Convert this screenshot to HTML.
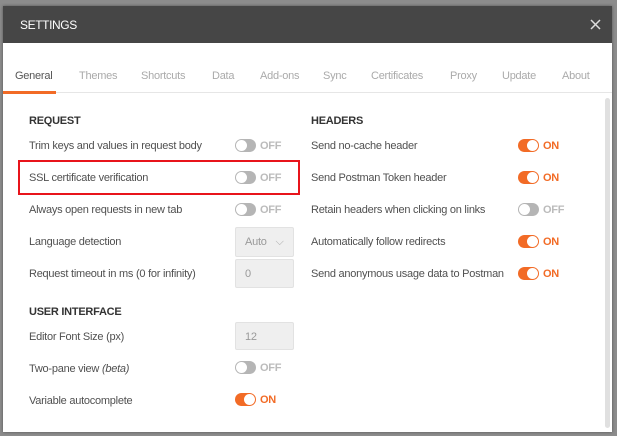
<!DOCTYPE html>
<html><head><style>
body{margin:0;width:617px;height:436px;background:#8c8c8c;position:relative;overflow:hidden;font-family:"Liberation Sans",sans-serif;font-size:11px;letter-spacing:-0.25px;color:#505050}
.d{position:absolute;left:3px;top:6px;width:609px;height:426px;background:#fff;box-shadow:0 0 3px rgba(0,0,0,.4)}
.h{position:absolute;left:0;top:0;width:609px;height:37px;background:#464646;color:#fff;font-size:12px}
.a{position:absolute;white-space:nowrap}
.tab{position:absolute;top:70px;color:#aaa;font-size:11px}
.tg{position:absolute;width:21px;height:13px;border-radius:7px;background:#b5b5b5}
.tg::after{content:"";position:absolute;top:1px;left:1px;width:11px;height:11px;border-radius:50%;background:#fff}
.tg.on{background:#f26b26}
.tg.on::after{left:9px}
.lb{position:absolute;font-weight:bold;font-size:11px}
.off{color:#bbb}.onl{color:#f26b26}
.in{position:absolute;background:#efefef;border:1px solid #e2e2e2;border-radius:2px;color:#999;box-sizing:border-box;padding-left:9px;line-height:28px}
.sec{position:absolute;font-weight:bold;color:#333;font-size:11px}
</style></head><body>
<div class="d">
<div class="h"><span class="a" style="left:17px;top:12px;letter-spacing:-0.4px">SETTINGS</span>
<svg style="position:absolute;left:587px;top:13px" width="11" height="11"><path d="M1 1L10 10M10 1L1 10" stroke="#ddd" stroke-width="1.5"/></svg></div>
<div style="position:absolute;left:0;top:86px;width:609px;height:1px;background:#e6e6e6"></div>
<div style="position:absolute;left:0;top:85px;width:53px;height:3px;background:#f26b26"></div>
<div style="position:absolute;left:602px;top:92px;width:5px;height:330px;background:#e0e0e0;border-radius:3px"></div>
</div>
<span class="tab" style="left:15px;color:#555">General</span>
<span class="tab" style="left:79px">Themes</span>
<span class="tab" style="left:141px">Shortcuts</span>
<span class="tab" style="left:212px">Data</span>
<span class="tab" style="left:260px">Add-ons</span>
<span class="tab" style="left:323px">Sync</span>
<span class="tab" style="left:371px">Certificates</span>
<span class="tab" style="left:450px">Proxy</span>
<span class="tab" style="left:502px">Update</span>
<span class="tab" style="left:562px">About</span>

<span class="sec" style="left:29px;top:115px">REQUEST</span>
<span class="sec" style="left:311px;top:115px">HEADERS</span>
<span class="sec" style="left:29px;top:306px">USER INTERFACE</span>

<div style="position:absolute;left:18px;top:160px;border:2px solid #e8141b;width:278px;height:31px"></div>

<span class="a" style="left:29px;top:140px">Trim keys and values in request body</span>
<div class="tg" style="left:235px;top:139px"></div><span class="lb off" style="left:260px;top:140px">OFF</span>
<span class="a" style="left:29px;top:172px">SSL certificate verification</span>
<div class="tg" style="left:235px;top:171px"></div><span class="lb off" style="left:260px;top:172px">OFF</span>
<span class="a" style="left:29px;top:204px">Always open requests in new tab</span>
<div class="tg" style="left:235px;top:203px"></div><span class="lb off" style="left:260px;top:204px">OFF</span>
<span class="a" style="left:29px;top:236px">Language detection</span>
<div class="in" style="left:235px;top:227px;width:59px;height:30px">Auto <span style="margin-left:6px;color:#aaa">⌵</span></div>
<span class="a" style="left:29px;top:268px">Request timeout in ms (0 for infinity)</span>
<div class="in" style="left:235px;top:259px;width:59px;height:29px">0</div>
<span class="a" style="left:29px;top:331px">Editor Font Size (px)</span>
<div class="in" style="left:235px;top:322px;width:59px;height:28px">12</div>
<span class="a" style="left:29px;top:363px">Two-pane view <i>(beta)</i></span>
<div class="tg" style="left:235px;top:361px"></div><span class="lb off" style="left:260px;top:362px">OFF</span>
<span class="a" style="left:29px;top:395px">Variable autocomplete</span>
<div class="tg on" style="left:235px;top:393px"></div><span class="lb onl" style="left:260px;top:394px">ON</span>

<span class="a" style="left:311px;top:140px">Send no-cache header</span>
<div class="tg on" style="left:518px;top:139px"></div><span class="lb onl" style="left:543px;top:140px">ON</span>
<span class="a" style="left:311px;top:172px">Send Postman Token header</span>
<div class="tg on" style="left:518px;top:171px"></div><span class="lb onl" style="left:543px;top:172px">ON</span>
<span class="a" style="left:311px;top:204px">Retain headers when clicking on links</span>
<div class="tg" style="left:518px;top:203px"></div><span class="lb off" style="left:543px;top:204px">OFF</span>
<span class="a" style="left:311px;top:236px">Automatically follow redirects</span>
<div class="tg on" style="left:518px;top:235px"></div><span class="lb onl" style="left:543px;top:236px">ON</span>
<span class="a" style="left:311px;top:268px">Send anonymous usage data to Postman</span>
<div class="tg on" style="left:518px;top:267px"></div><span class="lb onl" style="left:543px;top:268px">ON</span>
</body></html>
